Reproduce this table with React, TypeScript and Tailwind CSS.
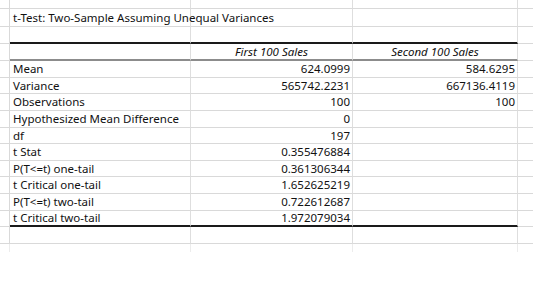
import React from "react";

type Row = {
  h: number;
  label?: string;
  v1?: string;
  v2?: string;
  kind?: "title" | "header" | "data" | "blank";
  bottom?: "gray" | "black" | "mid";
};

const rows: Row[] = [
  { h: 9, kind: "blank" },
  { h: 18, kind: "title", label: "t-Test: Two-Sample Assuming Unequal Variances" },
  { h: 17, kind: "blank", bottom: "black" },
  { h: 17, kind: "header", v1: "First 100 Sales", v2: "Second 100 Sales", bottom: "mid" },
  { h: 17, kind: "data", label: "Mean", v1: "624.0999", v2: "584.6295" },
  { h: 16, kind: "data", label: "Variance", v1: "565742.2231", v2: "667136.4119" },
  { h: 17, kind: "data", label: "Observations", v1: "100", v2: "100" },
  { h: 17, kind: "data", label: "Hypothesized Mean Difference", v1: "0" },
  { h: 16, kind: "data", label: "df", v1: "197" },
  { h: 17, kind: "data", label: "t Stat", v1: "0.355476884" },
  { h: 16, kind: "data", label: "P(T<=t) one-tail", v1: "0.361306344" },
  { h: 17, kind: "data", label: "t Critical one-tail", v1: "1.652625219" },
  { h: 17, kind: "data", label: "P(T<=t) two-tail", v1: "0.722612687" },
  { h: 16, kind: "data", label: "t Critical two-tail", v1: "1.972079034", bottom: "black" },
  { h: 17, kind: "blank" },
];

function midBorder(b?: Row["bottom"]) {
  if (b === "black") return "border-b-2 border-b-[#1a1a1a]";
  if (b === "mid") return "border-b-2 border-b-[#8c8c8c]";
  return "border-b border-b-[#d9d9d9]";
}

export default function App() {
  return (
    <div
      className="w-[533px] h-[291px] bg-white overflow-hidden text-[#111111]"
      style={{ fontFamily: '"Noto Sans", "Open Sans", sans-serif' }}
    >
      <div className="flex flex-col">
        {rows.map((r, i) => (
          <div key={i} className="flex" style={{ height: r.h }}>
            <div className="w-[10px] shrink-0 border-b border-r border-[#d9d9d9]" />
            <div
              className={`w-[181px] shrink-0 border-r border-r-[#dedede] ${midBorder(r.bottom)} flex items-center pl-[3px] text-[11.5px] leading-none whitespace-nowrap ${r.kind === "title" ? "overflow-visible relative z-10" : "overflow-hidden"}`}
            >
              {r.label && <span>{r.label}</span>}
            </div>
            <div
              className={`w-[162px] shrink-0 border-r border-r-[#dedede] ${midBorder(r.bottom)} flex items-center ${r.kind === "header" ? "justify-center italic" : "justify-end pr-[2px]"} text-[11.5px] leading-none whitespace-nowrap`}
            >
              {r.v1}
            </div>
            <div
              className={`w-[165px] shrink-0 border-r border-r-[#dedede] ${midBorder(r.bottom)} flex items-center ${r.kind === "header" ? "justify-center italic" : "justify-end pr-[2px]"} text-[11.5px] leading-none whitespace-nowrap`}
            >
              {r.v2}
            </div>
            <div className="flex-1 border-b border-[#d9d9d9]" />
          </div>
        ))}
        <div className="flex h-[8px]">
          <div className="w-[10px] shrink-0 border-r border-r-[#ececec]" />
          <div className="w-[181px] shrink-0 border-r border-r-[#ececec]" />
          <div className="w-[162px] shrink-0 border-r border-r-[#ececec]" />
          <div className="w-[165px] shrink-0 border-r border-r-[#ececec]" />
        </div>
      </div>
    </div>
  );
}
